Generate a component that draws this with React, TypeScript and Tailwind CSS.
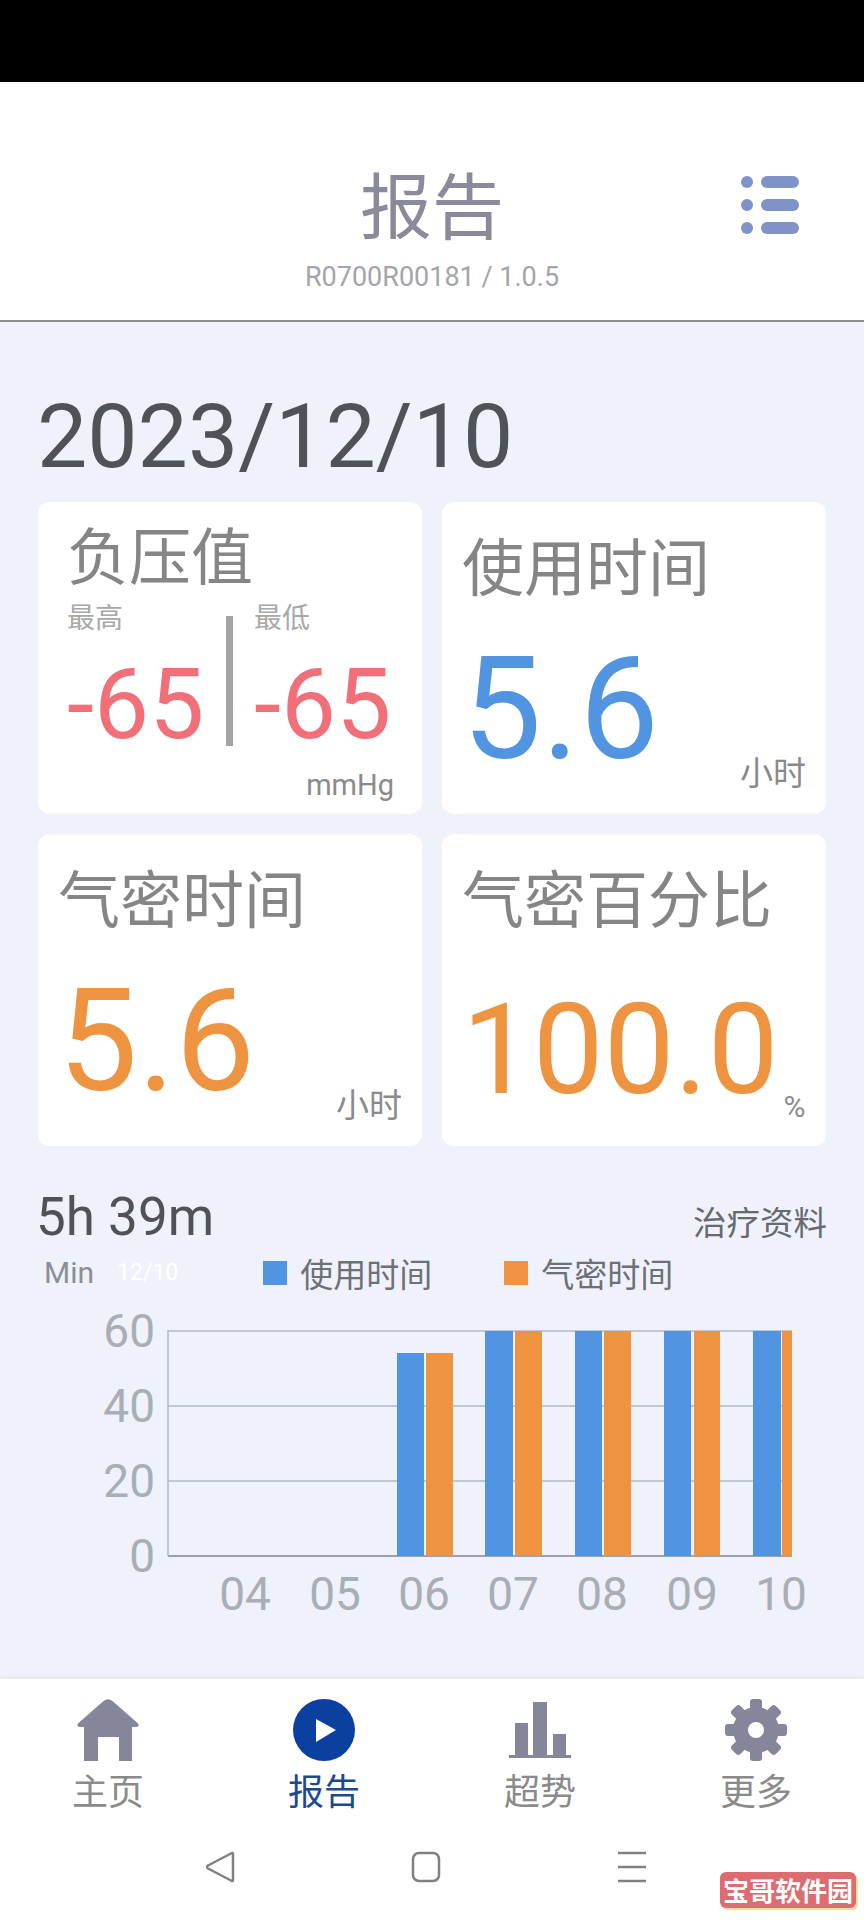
const cjk = "font-['Noto_Sans_CJK_SC','Noto_Sans',sans-serif]";
const num = "font-['Roboto','Noto_Sans_CJK_SC',sans-serif]";

function MenuIcon() {
  return (
    <svg width="58" height="58" viewBox="0 0 58 58" className="block">
      <g fill="#7f93c9">
        <circle cx="6" cy="6" r="6" />
        <circle cx="6" cy="29" r="6" />
        <circle cx="6" cy="52" r="6" />
        <rect x="20" y="0" width="38" height="12" rx="6" />
        <rect x="20" y="23" width="38" height="12" rx="6" />
        <rect x="20" y="46" width="38" height="12" rx="6" />
      </g>
    </svg>
  );
}

function HomeIcon() {
  return (
    <svg width="62" height="62" viewBox="0 0 62 62" className="block">
      <path
        d="M26.5 2 Q31 -1.5 35.500 2 L60.500 24 Q63.500 28 59 28 L55 28 L55 62 L42 62 L42 38 L21 38 L21 62 L7 62 L7 28 L3 28 Q-1.500 28 1.500 24 Z"
        fill="#85869a"
      />
    </svg>
  );
}

function PlayIcon() {
  return (
    <svg width="62" height="62" viewBox="0 0 62 62" className="block">
      <circle cx="31" cy="31" r="31" fill="#0b3fa0" />
      <path d="M23 20 L43 31 L23 43 Z" fill="#fff" />
    </svg>
  );
}

function TrendIcon() {
  return (
    <svg width="62" height="62" viewBox="0 0 62 62" className="block">
      <g fill="#85869a">
        <rect x="6" y="24" width="13" height="33" />
        <rect x="24" y="3" width="14" height="54" />
        <rect x="44" y="35" width="13" height="22" />
        <rect x="0" y="56" width="62" height="3" />
      </g>
    </svg>
  );
}

function GearIcon() {
  const teeth = [0, 45, 90, 135, 180, 225, 270, 315];
  return (
    <svg width="62" height="62" viewBox="0 0 62 62" className="block">
      <g fill="#85869a">
        <circle cx="31" cy="31" r="23" />
        {teeth.map((a) => (
          <rect key={a} x="25" y="0" width="12" height="16" rx="3" transform={`rotate(${a} 31 31)`} />
        ))}
      </g>
      <circle cx="31" cy="31" r="8" fill="#fff" />
    </svg>
  );
}

function Chart() {
  const yTicks = [
    { label: "60", y: 1 },
    { label: "40", y: 76 },
    { label: "20", y: 151 },
    { label: "0", y: 226 },
  ];
  const days = [
    { label: "04", x: 245 },
    { label: "05", x: 335 },
    { label: "06", x: 424 },
    { label: "07", x: 513 },
    { label: "08", x: 602 },
    { label: "09", x: 692 },
    { label: "10", x: 781 },
  ];
  const bars = [
    { x: 397, w: 27, top: 23, c: "#5194e2" },
    { x: 426, w: 27, top: 23, c: "#ee9440" },
    { x: 485, w: 28, top: 1, c: "#5194e2" },
    { x: 515, w: 27, top: 1, c: "#ee9440" },
    { x: 575, w: 27, top: 1, c: "#5194e2" },
    { x: 604, w: 27, top: 1, c: "#ee9440" },
    { x: 664, w: 27, top: 1, c: "#5194e2" },
    { x: 694, w: 26, top: 1, c: "#ee9440" },
    { x: 753, w: 28, top: 1, c: "#5194e2" },
    { x: 782, w: 10, top: 1, c: "#ee9440" },
  ];
  return (
    <svg width="864" height="330" viewBox="0 -30 864 330" className="block" fontFamily="Roboto, sans-serif">
      {yTicks.map((t) => (
        <g key={t.label}>
          <line x1="168" x2="792" y1={t.y} y2={t.y} stroke={t.label === "0" ? "#9ba0ac" : "#b4b8c4"} strokeWidth={t.label === "0" ? 2 : 1.500} />
          <text x="155" y={t.y + 16} textAnchor="end" fontSize="46" fill="#a9adb5">
            {t.label}
          </text>
        </g>
      ))}
      <line x1="168" x2="168" y1="0" y2="226" stroke="#b4b8c4" strokeWidth="1.500" />
      {bars.map((b) => (
        <rect key={b.x} x={b.x} y={b.top} width={b.w} height={226 - b.top} fill={b.c} />
      ))}
      {days.map((d) => (
        <text key={d.label} x={d.x} y="280" textAnchor="middle" fontSize="46" fill="#a9adb5">
          {d.label}
        </text>
      ))}
    </svg>
  );
}

function Tab({ icon, label, active }: { icon: React.ReactNode; label: string; active?: boolean }) {
  return (
    <div className="flex flex-col items-center">
      {icon}
      <span className={`${cjk} mt-[5px] text-[36px] leading-[46px] ${active ? "text-[#1a4a8c]" : "text-[#8a8a8a]"}`}>
        {label}
      </span>
    </div>
  );
}

export default function App() {
  return (
    <div className={`${num} relative flex h-[1920px] w-[864px] flex-col overflow-hidden bg-[#eff2fa]`}>
      <div className="h-[82px] bg-black" />

      <header className="grid h-[240px] grid-cols-[1fr_auto_1fr] border-b-2 border-[#8e8e92] bg-white">
        <div />
        <div className="flex flex-col items-center pt-[74px]">
          <h1 className={`${cjk} text-[72px] leading-[92px] font-normal text-[#8a8a9a]`}>报告</h1>
          <p className="mt-[14px] text-[27px] leading-[30px] text-[#a4a4aa]">R0700R00181 / 1.0.5</p>
        </div>
        <div className="flex justify-end pt-[94px] pr-[65px]">
          <MenuIcon />
        </div>
      </header>

      <main className="flex-1 px-[38px]">
        <div className="mt-[63px] -ml-px text-[89.5px] leading-[104px] text-[#4f5358]">2023/12/10</div>

        <div className="mt-[13px] grid grid-cols-[384px_384px] gap-x-[20px] gap-y-[20px]">
          <section className="h-[312px] rounded-[12px] bg-white pt-[9px] pl-[29px]">
            <div className={`${cjk} text-[62px] leading-[84px] text-[#858585]`}>负压值</div>
            <div className="flex">
              <div className="w-[159px]">
                <div className={`${cjk} pt-[2px] text-[28px] leading-[38px] text-[#a8a8a8]`}>最高</div>
                <div className="mt-[15px] text-[98px] leading-[110px] text-[#f06f78]">-65</div>
              </div>
              <div className="mt-[21px] h-[130px] w-[7px] bg-[#a4a4a4]" />
              <div className="ml-[21px]">
                <div className={`${cjk} pt-[2px] text-[28px] leading-[38px] text-[#a8a8a8]`}>最低</div>
                <div className="mt-[15px] text-[98px] leading-[110px] text-[#f06f78]">-65</div>
              </div>
            </div>
            <div className="mt-[8px] pr-[28px] text-right text-[29px] leading-[34px] text-[#8a8a8a]">mmHg</div>
          </section>

          <section className="h-[312px] rounded-[12px] bg-white pt-[20px] pl-[20px]">
            <div className={`${cjk} text-[62px] leading-[84px] text-[#858585]`}>使用时间</div>
            <div className="mt-[21px] text-[142px] leading-[166px] text-[#5194e2]">5.6</div>
            <div className={`${cjk} mt-[-44px] pr-[20px] text-right text-[33px] leading-[44px] text-[#8a8a8a]`}>小时</div>
          </section>

          <section className="h-[312px] rounded-[12px] bg-white pt-[20px] pl-[20px]">
            <div className={`${cjk} text-[62px] leading-[84px] text-[#858585]`}>气密时间</div>
            <div className="mt-[21px] text-[142px] leading-[166px] text-[#ee9440]">5.6</div>
            <div className={`${cjk} mt-[-44px] pr-[20px] text-right text-[33px] leading-[44px] text-[#8a8a8a]`}>小时</div>
          </section>

          <section className="h-[312px] rounded-[12px] bg-white pt-[20px] pl-[20px]">
            <div className={`${cjk} text-[62px] leading-[84px] text-[#858585]`}>气密百分比</div>
            <div className="mt-[39px] flex items-end">
              <span className="text-[126px] leading-[146px] text-[#ee9440]">100.0</span>
              <span className="ml-[5px] text-[30px] leading-[32px] text-[#8a8a8a]">%</span>
            </div>
          </section>
        </div>

        <div className="mt-[41px] flex items-end justify-between">
          <span className="-ml-[2px] text-[53px] leading-[60px] text-[#4f5358]">5h 39m</span>
          <span className={`${cjk} -mr-px mb-[4px] text-[33.5px] leading-[44px] text-[#666a70]`}>治疗资料</span>
        </div>

        <div className="mt-[8px] flex h-[36px] items-center">
          <span className="ml-[6px] text-[30px] leading-[36px] text-[#8a8e96]">Min</span>
          <span className="ml-[23px] text-[23px] leading-[36px] text-white">12/10</span>
          <span className="ml-[85px] h-[24px] w-[24px] bg-[#5194e2]" />
          <span className={`${cjk} ml-[13px] text-[33px] leading-[36px] text-[#6d7076]`}>使用时间</span>
          <span className="ml-[72px] h-[24px] w-[24px] bg-[#ee9440]" />
          <span className={`${cjk} ml-[13px] text-[33px] leading-[36px] text-[#6d7076]`}>气密时间</span>
        </div>

        <div className="-mx-[38px] mt-[9px]">
          <Chart />
        </div>
      </main>

      <nav className="h-[241px] bg-white pt-[20px] shadow-[0_-3px_3px_rgba(0,0,0,0.03)]">
        <div className="grid grid-cols-4">
          <Tab icon={<HomeIcon />} label="主页" />
          <Tab icon={<PlayIcon />} label="报告" active />
          <Tab icon={<TrendIcon />} label="超势" />
          <Tab icon={<GearIcon />} label="更多" />
        </div>
        <div className="mt-[39px] flex justify-center gap-[174px] pr-[12px]">
          <svg width="32" height="32" viewBox="0 0 32 32" fill="none" stroke="#808080" strokeWidth="2.500" strokeLinejoin="round" className="block">
            <path d="M29 3 L29 29 Q29 31 27 29.500 L4 17.500 Q2 16 4 14.500 L27 2.500 Q29 1 29 3 Z" />
          </svg>
          <svg width="32" height="32" viewBox="0 0 32 32" fill="none" stroke="#808080" strokeWidth="2.500" className="block">
            <rect x="3" y="2" width="26" height="28" rx="6" />
          </svg>
          <svg width="32" height="32" viewBox="0 0 32 32" stroke="#808080" strokeWidth="2.500" className="block">
            <line x1="2" x2="30" y1="2" y2="2" />
            <line x1="2" x2="30" y1="16" y2="16" />
            <line x1="2" x2="30" y1="30" y2="30" />
          </svg>
        </div>
      </nav>

      <div className={`${cjk} absolute top-[1872px] left-[720px] flex h-[36px] w-[136px] items-center justify-center rounded-[6px] bg-[#dd6b6f] text-[26px] leading-[36px] font-bold text-white shadow-[2px_2px_0_#f6dc9e]`}>
        宝哥软件园
      </div>
    </div>
  );
}
